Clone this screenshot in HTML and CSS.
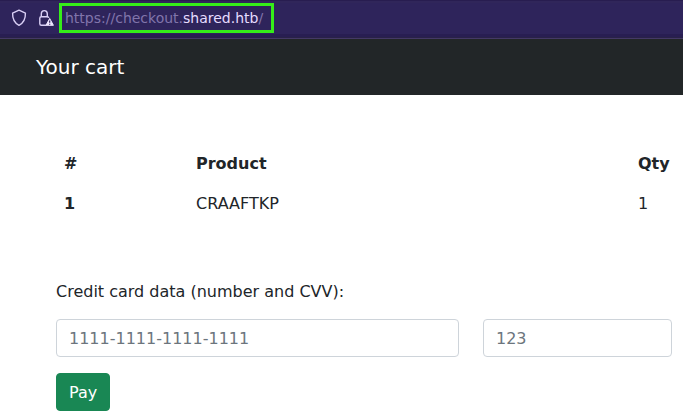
FILE: index.html
```html
<!DOCTYPE html>
<html lang="en">
<head>
<meta charset="utf-8">
<title>Your cart</title>
<link rel="stylesheet" href="styles.css">
</head>
<body>
<div class="toolbar">
  <svg class="shield" width="16" height="18" viewBox="0 0 16 18"><path d="M8 1.2 14.4 4.1C14.6 9.8 12.9 13.9 8 16.4 3.1 13.9 1.4 9.8 1.6 4.1Z"/></svg>
  <svg class="lock" width="17" height="18" viewBox="0 0 17 18">
    <path d="M8 16.2H3.3Q1.8 16.2 1.8 14.7V9.3Q1.8 7.8 3.3 7.8H9.3Q10.6 7.8 10.8 8.8M3.3 7.8V4.8A3 3.2 0 0 1 9.3 4.8V7.8"/>
    <path class="warning" d="M11.7 9.5 15.4 16.3H8Z"/>
    <path class="mark" d="M11.7 11.4V13.7M11.7 14.7V15.8"/>
  </svg>
  <div class="url">https://checkout.<span>shared.htb</span>/</div>
</div>
<header class="navbar">Your cart</header>
<main>
  <table>
    <thead><tr><th class="num">#</th><th class="product">Product</th><th>Qty</th></tr></thead>
    <tbody><tr><th>1</th><td>CRAAFTKP</td><td>1</td></tr></tbody>
  </table>
  <form>
    <label for="card">Credit card data (number and CVV):</label>
    <div class="fields">
      <input id="card" type="text" placeholder="1111-1111-1111-1111">
      <input type="text" placeholder="123" aria-label="CVV">
    </div>
    <button type="button">Pay</button>
  </form>
</main>
</body>
</html>
```
FILE: styles.css
```css
* { box-sizing: border-box; }
body {
  margin: 0;
  background: #fff;
  color: #212529;
  font: 16px/24px "DejaVu Sans", sans-serif;
  overflow: hidden;
}
.toolbar {
  display: flex;
  align-items: flex-start;
  height: 39px;
  padding: 3px 0 0 11px;
  background: linear-gradient(#281d50 0 1px, #30265a 1px 3px, #2e245b 3px 34px, #281e52 34px 37px, #292247 37px 38px, #443966 38px);
}
.toolbar svg {
  flex: none;
  margin-top: 6px;
  fill: none;
  stroke: #d9cff5;
  stroke-width: 1.4;
  stroke-linejoin: round;
}
.toolbar .lock { margin: 6px 4px 0 11px; }
.lock .warning { fill: #eee5ff; stroke: #eee5ff; stroke-width: 1; }
.lock .mark { stroke: #2e245b; stroke-width: 1.2; }
.url {
  width: 215px;
  height: 30px;
  padding-left: 3px;
  border: 3px solid #35ee19;
  color: #8175ab;
  font-size: 14px;
  line-height: 24px;
  white-space: nowrap;
}
.url span { color: #e6dcff; }
.navbar {
  height: 56px;
  padding: 13px 36px;
  background: #222628;
  color: #fff;
  font-size: 20px;
  line-height: 30px;
}
main { padding: 49px 11px 0 56px; }
table {
  width: 622px;
  table-layout: fixed;
  border-collapse: collapse;
}
th, td { padding: 8px; text-align: left; }
th { font-weight: bold; }
.num { width: 132px; }
.product { width: 442px; }
form { padding-top: 56px; }
label { display: block; margin-bottom: 15px; }
.fields {
  display: grid;
  grid-template-columns: 403px 189px;
  gap: 24px;
  margin-bottom: 16px;
}
input {
  width: 100%;
  height: 38px;
  padding: 6px 12px;
  border: 1px solid #ced4da;
  border-radius: 4px;
  background: #fff;
  font: inherit;
}
input::placeholder { color: #6c757d; opacity: 1; }
button {
  display: block;
  height: 38px;
  padding: 7px 12px 5px;
  border: 1px solid #198754;
  border-radius: 4px;
  background: #198754;
  color: #fff;
  font: inherit;
}
```
